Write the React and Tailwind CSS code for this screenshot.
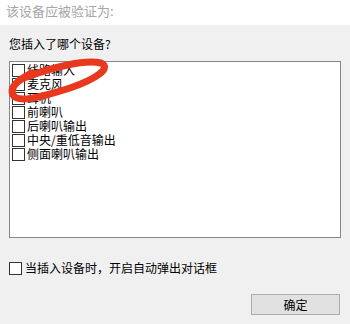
const items = ['线路输入', '麦克风', '耳机', '前喇叭', '后喇叭输出', '中央/重低音输出', '侧面喇叭输出'];

const Box = () => (
  <span className="w-[13px] h-[13px] border border-[#333333] bg-white shrink-0" />
);

export default function App() {
  return (
    <div
      className="relative w-[350px] h-[324px] bg-[#f0f0f0] text-[12px] text-black overflow-hidden"
      style={{ fontFamily: '"Noto Sans CJK SC", "Microsoft YaHei", sans-serif' }}
    >
      <div className="h-[25px] bg-white pl-[6px] leading-[22px] text-[#a6a6a6] text-[13px]">
        该设备应被验证为:
      </div>

      <div className="pl-[9px] mt-[12px] leading-[14px]">您插入了哪个设备?</div>

      <div className="ml-[9px] mt-[10px] w-[332px] h-[177px] bg-white border border-[#828790] pt-[1px] pl-[2px]">
        {items.map((t) => (
          <div key={t} className="flex items-center gap-[2px] h-[14px]">
            <Box />
            <span className="block h-[14px] leading-[14px]">{t}</span>
          </div>
        ))}
      </div>

      <div className="flex items-center gap-[3px] ml-[9px] mt-[23px] h-[14px]">
        <Box />
        <span className="block h-[14px] leading-[14px]">当插入设备时，开启自动弹出对话框</span>
      </div>

      <div className="flex justify-end pr-[10px] mt-[19px]">
        <button className="w-[89px] h-[21px] bg-[#e1e1e1] border border-[#adadad] leading-[19px] text-[12px]">
          确定
        </button>
      </div>

      <svg className="absolute left-0 top-0 pointer-events-none" width="350" height="324">
        <path
          d="M 24 78 C 50 68, 85 59, 101 63 C 112 68, 96 79, 70 88 C 45 96, 18 104, 13 95 C 9 87, 18 80, 32 73"
          fill="none"
          stroke="#e8391f"
          strokeWidth="7"
          strokeLinecap="round"
        />
      </svg>
    </div>
  );
}
